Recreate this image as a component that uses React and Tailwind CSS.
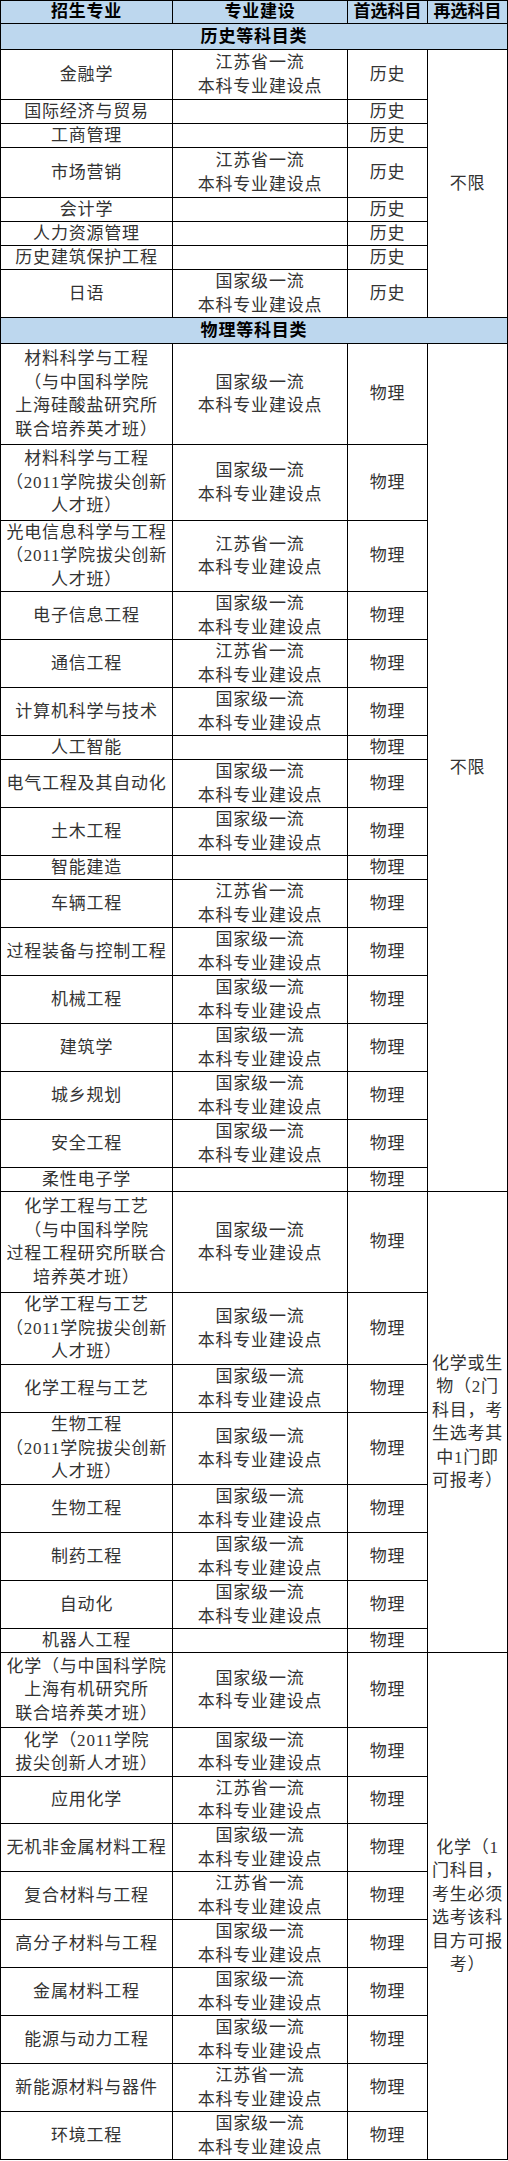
const J = ["江苏省一流", "本科专业建设点"];
const G = ["国家级一流", "本科专业建设点"];

const groups = [
  {
    section: "历史等科目类",
    subject: "历史",
    note: ["不限"],
    rows: [
      { name: ["金融学"], build: J, h: "h-[50px]" },
      { name: ["国际经济与贸易"], build: null, h: "h-[24px]" },
      { name: ["工商管理"], build: null, h: "h-[24px]" },
      { name: ["市场营销"], build: J, h: "h-[50px]" },
      { name: ["会计学"], build: null, h: "h-[24px]" },
      { name: ["人力资源管理"], build: null, h: "h-[24px]" },
      { name: ["历史建筑保护工程"], build: null, h: "h-[24px]" },
      { name: ["日语"], build: G, h: "h-[48px]" },
    ],
  },
  {
    section: "物理等科目类",
    subject: "物理",
    note: ["不限"],
    rows: [
      { name: ["材料科学与工程", "（与中国科学院", "上海硅酸盐研究所", "联合培养英才班）"], build: G, h: "h-[101px]" },
      { name: ["材料科学与工程", "（2011学院拔尖创新", "人才班）"], build: G, h: "h-[76px]" },
      { name: ["光电信息科学与工程", "（2011学院拔尖创新", "人才班）"], build: J, h: "h-[71px]" },
      { name: ["电子信息工程"], build: G, h: "h-[48px]" },
      { name: ["通信工程"], build: J, h: "h-[48px]" },
      { name: ["计算机科学与技术"], build: G, h: "h-[48px]" },
      { name: ["人工智能"], build: null, h: "h-[24px]" },
      { name: ["电气工程及其自动化"], build: G, h: "h-[48px]" },
      { name: ["土木工程"], build: G, h: "h-[48px]" },
      { name: ["智能建造"], build: null, h: "h-[24px]" },
      { name: ["车辆工程"], build: J, h: "h-[48px]" },
      { name: ["过程装备与控制工程"], build: G, h: "h-[48px]" },
      { name: ["机械工程"], build: G, h: "h-[48px]" },
      { name: ["建筑学"], build: G, h: "h-[48px]" },
      { name: ["城乡规划"], build: G, h: "h-[48px]" },
      { name: ["安全工程"], build: G, h: "h-[48px]" },
      { name: ["柔性电子学"], build: null, h: "h-[24px]" },
    ],
  },
  {
    subject: "物理",
    note: ["化学或生", "物（2门", "科目，考", "生选考其", "中1门即", "可报考）"],
    rows: [
      { name: ["化学工程与工艺", "（与中国科学院", "过程工程研究所联合", "培养英才班）"], build: G, h: "h-[101px]" },
      { name: ["化学工程与工艺", "（2011学院拔尖创新", "人才班）"], build: G, h: "h-[72px]" },
      { name: ["化学工程与工艺"], build: G, h: "h-[48px]" },
      { name: ["生物工程", "（2011学院拔尖创新", "人才班）"], build: G, h: "h-[72px]" },
      { name: ["生物工程"], build: G, h: "h-[48px]" },
      { name: ["制药工程"], build: G, h: "h-[48px]" },
      { name: ["自动化"], build: G, h: "h-[48px]" },
      { name: ["机器人工程"], build: null, h: "h-[24px]" },
    ],
  },
  {
    subject: "物理",
    note: ["化学（1", "门科目，", "考生必须", "选考该科", "目方可报", "考）"],
    rows: [
      { name: ["化学（与中国科学院", "上海有机研究所", "联合培养英才班）"], build: G, h: "h-[75px]" },
      { name: ["化学（2011学院", "拔尖创新人才班）"], build: G, h: "h-[49px]" },
      { name: ["应用化学"], build: J, h: "h-[47px]" },
      { name: ["无机非金属材料工程"], build: G, h: "h-[48px]" },
      { name: ["复合材料与工程"], build: J, h: "h-[48px]" },
      { name: ["高分子材料与工程"], build: G, h: "h-[48px]" },
      { name: ["金属材料工程"], build: G, h: "h-[48px]" },
      { name: ["能源与动力工程"], build: G, h: "h-[48px]" },
      { name: ["新能源材料与器件"], build: J, h: "h-[48px]" },
      { name: ["环境工程"], build: G, h: "h-[48px]" },
    ],
  },
];

const cell =
  "border-r border-b border-black flex flex-col items-center justify-center text-center";

function Lines({ lines }) {
  if (!lines) return null;
  return lines.map((l, i) => (
    <span key={i} className="whitespace-nowrap">
      {l}
    </span>
  ));
}

function Row({ row, subject }) {
  return (
    <div className={`flex ${row.h}`}>
      <div className={`${cell} w-[172px]`}>
        <Lines lines={row.name} />
      </div>
      <div className={`${cell} w-[175px]`}>
        <Lines lines={row.build} />
      </div>
      <div className={`${cell} w-[80px]`}>{subject}</div>
    </div>
  );
}

function Group({ group }) {
  return (
    <>
      {group.section && (
        <div className="h-[26px] bg-[#bdd7ee] border-r border-b border-black flex items-center justify-center font-bold text-black">
          {group.section}
        </div>
      )}
      <div className="flex">
        <div className="flex flex-col">
          {group.rows.map((r, i) => (
            <Row key={i} row={r} subject={group.subject} />
          ))}
        </div>
        <div className={`${cell} w-[80px]`}>
          <Lines lines={group.note} />
        </div>
      </div>
    </>
  );
}

export default function App() {
  return (
    <div className="w-[508px] bg-white border-l border-t border-black text-[17px] leading-[23.5px] tracking-[0.8px] text-[#333] font-['Liberation_Serif','Noto_Sans_CJK_SC',serif]">
      <div className="flex h-[23px] bg-[#bdd7ee] font-bold text-black">
        <div className={`${cell} w-[172px]`}>招生专业</div>
        <div className={`${cell} w-[175px]`}>专业建设</div>
        <div className={`${cell} w-[80px] tracking-normal`}>首选科目</div>
        <div className={`${cell} w-[80px] tracking-normal`}>再选科目</div>
      </div>
      {groups.map((g, i) => (
        <Group key={i} group={g} />
      ))}
    </div>
  );
}
